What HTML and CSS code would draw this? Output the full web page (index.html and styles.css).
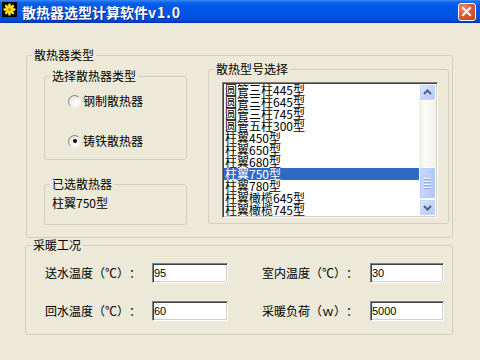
FILE: index.html
```html
<!DOCTYPE html>
<html lang="zh-CN">
<head>
<meta charset="utf-8">
<title>散热器选型计算软件v1.0</title>
<link rel="stylesheet" href="styles.css">
</head>
<body>
<div class="window">
  <div class="titlebar">
    <svg class="app-icon" viewBox="0 0 15 15" width="15" height="15">
      <rect x="0" y="0" width="15" height="15" fill="#000"/>
      <g fill="#FFE31A">
        <rect x="6.3" y="1.5" width="2.4" height="12" rx="0.6"/>
        <rect x="1.5" y="6.3" width="12" height="2.4" rx="0.6"/>
        <rect x="6.3" y="1.5" width="2.4" height="12" rx="0.6" transform="rotate(45 7.5 7.5)"/>
        <rect x="6.3" y="1.5" width="2.4" height="12" rx="0.6" transform="rotate(-45 7.5 7.5)"/>
        <circle cx="7.5" cy="7.5" r="4"/>
      </g>
      <circle cx="7.5" cy="7.5" r="1.6" fill="#C98A00"/>
    </svg>
    <span class="title">散热器选型计算软件<span class="ver">v1.0</span></span>
    <div class="close">
      <svg viewBox="0 0 18 18" width="16" height="16">
        <path d="M4.5 4.5 L12.5 12.5 M12.5 4.5 L4.5 12.5" stroke="#fff" stroke-width="2.2" stroke-linecap="square" fill="none"/>
      </svg>
    </div>
  </div>

  <div class="client">
    <fieldset class="group g-type">
      <legend>散热器类型</legend>
      <div class="type-body">
        <div class="left-col">
          <fieldset class="group g-choose">
            <legend>选择散热器类型</legend>
            <div class="radios">
              <div class="radio"><span class="radio-dot"></span>钢制散热器</div>
              <div class="radio"><span class="radio-dot checked"></span>铸铁散热器</div>
            </div>
          </fieldset>
          <fieldset class="group g-selected">
            <legend>已选散热器</legend>
            <div class="selected-text">柱翼750型</div>
          </fieldset>
        </div>
        <fieldset class="group g-model">
          <legend>散热型号选择</legend>
          <div class="listbox">
            <ul class="items">
              <li>圆管三柱445型</li>
              <li>圆管三柱645型</li>
              <li>圆管三柱745型</li>
              <li>圆管五柱300型</li>
              <li>柱翼450型</li>
              <li>柱翼650型</li>
              <li>柱翼680型</li>
              <li class="sel">柱翼750型</li>
              <li>柱翼780型</li>
              <li>柱翼橄榄645型</li>
              <li>柱翼橄榄745型</li>
            </ul>
            <div class="scrollbar">
              <div class="sb-btn">
                <svg viewBox="0 0 15 15" width="15" height="15"><path d="M4 9 L7.5 5.5 L11 9" stroke="#4D6185" stroke-width="2" fill="none"/></svg>
              </div>
              <div class="sb-track">
                <div class="sb-thumb">
                  <span class="grip"></span><span class="grip"></span><span class="grip"></span><span class="grip"></span>
                </div>
              </div>
              <div class="sb-btn">
                <svg viewBox="0 0 15 15" width="15" height="15"><path d="M4 6 L7.5 9.5 L11 6" stroke="#4D6185" stroke-width="2" fill="none"/></svg>
              </div>
            </div>
          </div>
        </fieldset>
      </div>
    </fieldset>

    <fieldset class="group g-cond">
      <legend>采暖工况</legend>
      <div class="cond-body">
        <div class="field-row">
          <span class="label">送水温度（℃）：</span>
          <input class="field" type="text" value="95" readonly>
          <span class="label label-r">室内温度（℃）：</span>
          <input class="field field-r" type="text" value="30" readonly>
        </div>
        <div class="field-row">
          <span class="label">回水温度（℃）：</span>
          <input class="field" type="text" value="60" readonly>
          <span class="label label-r">采暖负荷（ｗ）：</span>
          <input class="field field-r" type="text" value="5000" readonly>
        </div>
      </div>
    </fieldset>
  </div>
</div>
</body>
</html>
```

FILE: styles.css
```css
* { box-sizing: border-box; }
html, body { margin: 0; padding: 0; }
body {
  width: 480px;
  height: 360px;
  overflow: hidden;
  background: #ECE9D8;
  font-family: "Noto Sans CJK SC", "Noto Sans", sans-serif;
  font-size: 12px;
  color: #000;
  text-spacing-trim: space-all;
}

/* title bar */
.titlebar {
  height: 23px;
  display: flex;
  align-items: center;
  padding-left: 2px;
  background: linear-gradient(to bottom,
    #3C8CF8 0px, #2677F2 1px, #0A61EA 3px, #0058E7 6px,
    #0055E5 14px, #004FDB 18px, #0047CF 21px, #0039B3 22px, #0039B3 23px);
}
.app-icon {
  flex: none;
  align-self: flex-start;
  margin-top: 2px;
}
.title {
  margin-left: 5px;
  color: #fff;
  font-weight: 700;
  font-size: 14px;
  line-height: 16px;
  text-shadow: 1px 1px 0 #0C2A8C;
  white-space: nowrap;
}
.ver { letter-spacing: 1px; }
.close {
  margin-left: auto;
  margin-right: 4px;
  width: 18px;
  height: 18px;
  flex: none;
  display: flex;
  align-items: center;
  justify-content: center;
  border: 1px solid #fff;
  border-radius: 3px;
  background: radial-gradient(circle at 30% 25%, #EE8B6C 0%, #DD5A36 45%, #C23E1B 100%);
}

/* client */
.client { padding: 25px 0 0 25px; }

fieldset.group {
  margin: 0;
  padding: 0;
  min-width: 0;
  border: 1px solid #D0D0BF;
  border-radius: 3px;
}
fieldset.group > legend {
  margin-left: 5px;
  padding: 0 2px;
  font-size: 12px;
  line-height: 14px;
}

.g-type { margin-left: 1px !important; width: 427px; height: 190px; }
.type-body { display: flex; align-items: flex-start; gap: 21px; padding-left: 17px; }
.left-col { display: flex; flex-direction: column; gap: 17px; margin-top: 7px; }

.g-choose { width: 143px; height: 91px; }
.radios { display: flex; flex-direction: column; gap: 20px; padding: 8px 0 0 23px; }
.radio { height: 20px; display: flex; align-items: center; line-height: 20px; }
.radio-dot {
  width: 13px;
  height: 13px;
  flex: none;
  margin-right: 2px;
  border-radius: 50%;
  border: 1px solid;
  border-color: #8E8C84 #F4F3EE #F4F3EE #8E8C84;
  background: radial-gradient(circle at 65% 65%, #FFFFFF 0%, #F2F1EC 45%, #D6D4CC 100%);
  display: flex;
  align-items: center;
  justify-content: center;
}
.radio-dot.checked::after {
  content: "";
  width: 4px;
  height: 4px;
  border-radius: 50%;
  background: #000;
}

.g-selected { width: 143px; height: 48px; }
.selected-text { padding: 5px 0 0 7px; line-height: 14px; }

.g-model { width: 241px; height: 162px; margin-top: 1px; }
.listbox {
  margin: 6px 0 0 13px;
  width: 216px;
  height: 136px;
  display: flex;
  background: #fff;
  border: 1px solid;
  border-color: #808080 #FFFFFF #FFFFFF #808080;
  box-shadow: inset 1px 1px 0 #404040, inset -1px -1px 0 #D4D0C8;
  padding: 1px;
}
.items {
  list-style: none;
  margin: 0;
  padding: 0;
  flex: 1;
  overflow: hidden;
}
.items li {
  height: 12px;
  line-height: 12px;
  padding-left: 1px;
  white-space: nowrap;
}
.items li.sel { background: #316AC5; color: #fff; }

.scrollbar {
  width: 17px;
  flex: none;
  display: flex;
  flex-direction: column;
  background: linear-gradient(to right, #EEEDE5 0%, #FBFBF8 35%, #F3F2EC 100%);
}
.sb-btn {
  height: 17px;
  flex: none;
  border: 1px solid #FFFFFF;
  border-radius: 2px;
  background: linear-gradient(135deg, #E1EAFE 0%, #C6D5FB 50%, #B4C8F6 100%);
  box-shadow: inset 0 0 0 1px #C3D3FD;
  display: flex;
  align-items: center;
  justify-content: center;
}
.sb-track { flex: 1; }
.sb-thumb {
  margin-top: 66px;
  height: 32px;
  border: 1px solid #FFFFFF;
  border-radius: 2px;
  background: linear-gradient(to right, #C9D8FC 0%, #BCCEFA 60%, #B0C6F7 100%);
  box-shadow: inset 0 0 0 1px #B8CBF8;
  display: flex;
  flex-direction: column;
  align-items: center;
  justify-content: center;
  gap: 1px;
}
.grip {
  width: 7px;
  height: 1px;
  background: #EEF4FE;
  box-shadow: 0 1px 0 #8CA6E0;
  margin-bottom: 1px;
}

/* conditions */
.g-cond { width: 428px; height: 97px; margin-top: 16px; }
.cond-body { display: flex; flex-direction: column; gap: 18px; padding: 11px 0 0 19px; }
.field-row { display: flex; align-items: center; height: 20px; }
.label { width: 107px; line-height: 20px; white-space: nowrap; }
.label-r { width: 108px; margin-left: 34px; }
.field {
  width: 76px;
  height: 20px;
  margin: 0;
  padding: 0 0 0 1px;
  border: 1px solid;
  border-color: #808080 #FFFFFF #FFFFFF #808080;
  box-shadow: inset 1px 1px 0 #404040, inset -1px -1px 0 #D4D0C8;
  background: #fff;
  font-family: "Liberation Sans", Arial, sans-serif;
  font-size: 11px;
  color: #000;
  outline: none;
}
.field-r { width: 74px; }
```
